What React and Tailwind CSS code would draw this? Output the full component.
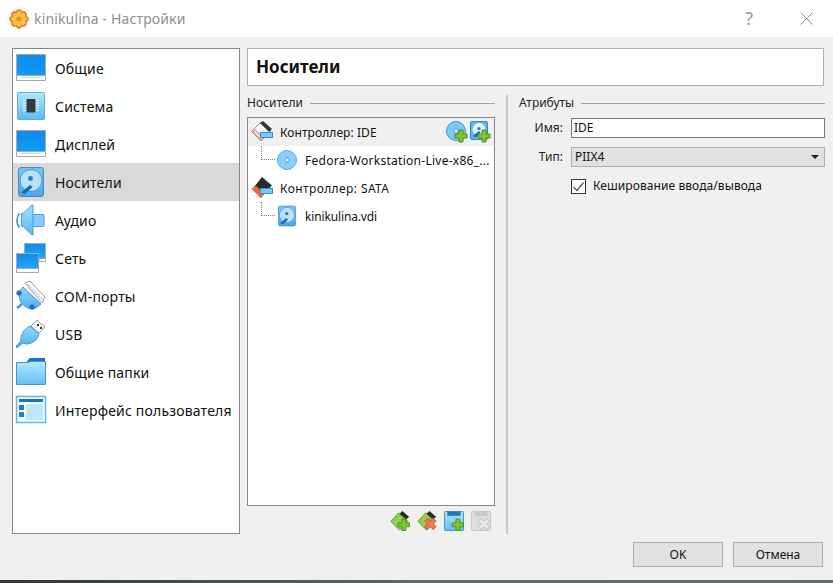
const Grad = ({ id, from, to }) => (
  <defs>
    <linearGradient id={id} x1="0" y1="0" x2="0" y2="1">
      <stop offset="0" stopColor={from} />
      <stop offset="1" stopColor={to} />
    </linearGradient>
  </defs>
);

const Gear = () => (
  <svg width="20" height="20" viewBox="0 0 20 20">
    {[0, 45, 90, 135, 180, 225, 270, 315].map((a) => (
      <circle key={a} cx="10" cy="3.4" r="3.1" fill="#e8772a" transform={`rotate(${a} 10 10)`} />
    ))}
    <circle cx="10" cy="10" r="6.8" fill="#f3a02f" />
    {[0, 45, 90, 135, 180, 225, 270, 315].map((a) => (
      <circle key={a} cx="10" cy="4" r="2" fill="#f9c440" transform={`rotate(${a} 10 10)`} />
    ))}
    <circle cx="10" cy="10" r="4.6" fill="#f9c440" />
    <circle cx="10" cy="10" r="2.6" fill="#ec8a24" />
  </svg>
);

const Monitor = () => (
  <svg width="32" height="30" viewBox="0 0 32 30">
    <Grad id="mon" from="#0f8bee" to="#0c9cf8" />
    <rect x="1.5" y="1.5" width="29" height="21" fill="url(#mon)" stroke="#a5a9ad" />
    <path d="M1.5 22.5h29v5h-29z" fill="#fff" stroke="#a5a9ad" />
    <path d="M6 23.5h20v1.5H6z" fill="#d8d8d8" />
  </svg>
);

const Chip = () => (
  <svg width="32" height="30" viewBox="0 0 32 30">
    <Grad id="chip" from="#aee8ff" to="#57bdf3" />
    <rect x="2.5" y="1.5" width="27" height="27" rx="1.5" fill="url(#chip)" stroke="#69a7de" />
    <path d="M8 9.500h16M8 12h16M8 14.500h16M8 17h16M8 19.500h16" stroke="#eef9ff" strokeWidth="1.2" />
    <rect x="11.500" y="8" width="9" height="13.500" rx="1" fill="#34383f" />
  </svg>
);

const Disk = ({ size = 32 }) => (
  <svg width={size} height={size} viewBox="0 0 32 32">
    <Grad id={`disk${size}`} from="#7cc4f1" to="#4da6e6" />
    <rect x="3.5" y="1.5" width="25" height="29" rx="2.5" fill={`url(#disk${size})`} stroke="#3b8ccd" />
    <circle cx="16" cy="14.5" r="11" fill="#b9e1f8" stroke="#3b8ccd" strokeWidth="0.8" />
    <circle cx="15.500" cy="12.500" r="2.4" fill="#1c7fd0" />
    <path d="M6 26.500l9-7.500 2.500 2-7.500 7z" fill="#1368b5" />
  </svg>
);

const Speaker = () => (
  <svg width="32" height="32" viewBox="0 0 32 32">
    <Grad id="spk" from="#a6e0ff" to="#58b8f1" />
    <rect x="17" y="10.500" width="12" height="12" rx="1" fill="#7fcdf8" stroke="#4f9fdc" />
    <path d="M6.500 9.500h1.500l9-8.500h1v30h-1l-9-8.500H6.500z" fill="url(#spk)" stroke="#4f9fdc" />
    <path d="M4.500 9.500c-3.500 4-3.500 10 0 14" fill="none" stroke="#2f8fdc" strokeWidth="1.5" />
  </svg>
);

const Network = () => (
  <svg width="32" height="32" viewBox="0 0 32 32">
    <Grad id="net" from="#0f8bee" to="#22a7fa" />
    <rect x="9.5" y="1.5" width="21" height="15" fill="url(#net)" stroke="#a5a9ad" />
    <path d="M24 16.5h6.500v3H24z" fill="#fff" stroke="#a5a9ad" />
    <rect x="1.5" y="11.5" width="22" height="15" fill="url(#net)" stroke="#a5a9ad" />
    <path d="M1.5 26.500h22v4h-22z" fill="#fff" stroke="#a5a9ad" />
  </svg>
);

const Com = () => (
  <svg width="32" height="32" viewBox="0 0 32 32">
    <Grad id="com" from="#92d8fc" to="#4fb0ee" />
    <path d="M10 3l5-2 15 16-3 6z" fill="#f8f8f8" stroke="#9a9a9a" />
    <path d="M13 5l14 14" stroke="#bcbcbc" strokeWidth="1.5" strokeDasharray="1.500 1.500" />
    <path d="M8 7l18 17-5 4c-6 2-11 0-15-6C3 17 4 11 8 7z" fill="url(#com)" stroke="#4594d4" />
    <circle cx="4" cy="13" r="2.6" fill="#1971c8" />
    <circle cx="17" cy="27" r="2.6" fill="#1971c8" />
    <path d="M7 24l-5 4" stroke="#4594d4" strokeWidth="2.5" />
  </svg>
);

const Usb = () => (
  <svg width="32" height="32" viewBox="0 0 32 32">
    <Grad id="usb" from="#92d8fc" to="#4fb0ee" />
    <path d="M22 2l8 7-6 6-8-7z" fill="#f7f7f7" stroke="#9a9a9a" />
    <rect x="22" y="6" width="2" height="2" fill="#333" />
    <rect x="25" y="9" width="2" height="2" fill="#333" />
    <path d="M15 8l9 8c-1 6-7 10-13 10l-3-1-6 5-1-2 5-5c-1-6 3-12 9-15z" fill="url(#usb)" stroke="#4594d4" />
  </svg>
);

const Folder = () => (
  <svg width="32" height="30" viewBox="0 0 32 30">
    <Grad id="fold" from="#b4e9ff" to="#62c0f5" />
    <path d="M12 4l3-3h15v6H12z" fill="#1b72c4" />
    <path d="M1.5 5.500h11l3-1h15v23h-29z" fill="url(#fold)" stroke="#3f92d6" />
  </svg>
);

const Ui = () => (
  <svg width="32" height="30" viewBox="0 0 32 30">
    <rect x="1.500" y="1.500" width="29" height="26" fill="#f4fbff" stroke="#64b4ea" strokeWidth="1.500" />
    <rect x="4" y="4" width="24" height="3" fill="#1c72bd" />
    <rect x="4" y="10" width="5" height="5" fill="#1d7fd0" />
    <rect x="4" y="17" width="5" height="5" fill="#1d7fd0" />
    <rect x="11" y="9" width="17" height="16" fill="#bfe7fb" />
  </svg>
);

const ControllerIde = () => (
  <svg width="24" height="24" viewBox="0 0 24 24">
    <path d="M11 2L1.500 11.500 11 21l10-9.500z" fill="#f8f8f8" stroke="#8a8a8a" />
    <path d="M2 12l9 9 3-3-9-9z" fill="#dca088" />
    <path d="M4.500 11.500l7 7" stroke="#f4f4f4" strokeWidth="1.500" />
    <path d="M10 3l3-2 9 8-3 3z" fill="#333" />
    <rect x="10.500" y="12.500" width="12" height="5" fill="#7ccbf7" stroke="#2e8fd8" />
  </svg>
);

const ControllerSata = () => (
  <svg width="24" height="24" viewBox="0 0 24 24">
    <path d="M12 1l10 8.500-4 4H6.500L4 11z" fill="#2c2c2c" />
    <path d="M2 13l4-3 8 8-3 4z" fill="#ef6a3a" stroke="#d65228" strokeWidth="0.6" />
    <rect x="10.500" y="12.500" width="12" height="5" fill="#7ccbf7" stroke="#2e8fd8" />
  </svg>
);

const Plus = ({ x, y, fill = "#7fc52f", stroke = "#4c8f1a" }) => (
  <path
    transform={`translate(${x} ${y})`}
    d="M4 0h4v4h4v4H8v4H4V8H0V4h4z"
    fill={fill}
    stroke={stroke}
    strokeLinejoin="round"
  />
);

const Cross = ({ x, y, fill = "#f4764e", stroke = "#c9552f" }) => (
  <path
    transform={`translate(${x} ${y})`}
    d="M3 0l3 3 3-3 3 3-3 3 3 3-3 3-3-3-3 3-3-3 3-3-3-3z"
    fill={fill}
    stroke={stroke}
    strokeLinejoin="round"
  />
);

const AddDisc = () => (
  <svg width="22" height="22" viewBox="0 0 22 22">
    <circle cx="10" cy="10" r="9.5" fill="#7cc8f5" stroke="#3e9ade" />
    <circle cx="10" cy="10" r="2.2" fill="#d9f0fd" stroke="#3e9ade" />
    <Plus x={9} y={9} />
  </svg>
);

const AddHd = () => (
  <svg width="22" height="22" viewBox="0 0 22 22">
    <rect x="1.5" y="0.5" width="17" height="18" rx="1.5" fill="#64b5ec" stroke="#2e86cc" />
    <circle cx="10" cy="8.5" r="6.5" fill="#e3f4fe" />
    <circle cx="10" cy="7.500" r="1.6" fill="#1b74c4" />
    <path d="M4 15l6-5 1.500 1.500-5 5z" fill="#1368b5" />
    <Plus x={9} y={9} />
  </svg>
);

const Cd = () => (
  <svg width="22" height="22" viewBox="0 0 22 22">
    <circle cx="11" cy="11" r="9.5" fill="#88d0f7" stroke="#52abe6" />
    <circle cx="11" cy="11" r="2.2" fill="#f2fbff" stroke="#3e9ade" />
  </svg>
);

const Diamond = () => (
  <g>
    <path d="M9 2L1 11l9 9 9-9z" fill="#8fd14a" stroke="#5d9e25" />
    <path d="M10 3l3-3 7 6-3 3z" fill="#2a2a2a" />
  </g>
);

const AddCtl = () => (
  <svg width="20" height="20" viewBox="0 0 21 21">
    <Diamond />
    <Plus x={8.500} y={8.500} />
  </svg>
);

const DelCtl = () => (
  <svg width="20" height="20" viewBox="0 0 21 21">
    <path d="M9 2L1 11l9 9 9-9z" fill="#8fd14a" stroke="#5d9e25" />
    <path d="M10 3l3-3 7 6-3 3z" fill="#2a2a2a" />
    <Cross x={8} y={7.500} />
  </svg>
);

const AddAtt = () => (
  <svg width="20" height="20" viewBox="0 0 21 21">
    <Grad id="att" from="#b2e6ff" to="#62bdf3" />
    <rect x="0.5" y="0.5" width="20" height="20" rx="1" fill="url(#att)" stroke="#3e8fd0" />
    <rect x="3.5" y="0.5" width="14" height="4.500" fill="#1b74c4" />
    <Plus x={8.500} y={8.500} />
  </svg>
);

const DelAtt = () => (
  <svg width="20" height="20" viewBox="0 0 21 21">
    <rect x="0.5" y="0.5" width="20" height="20" rx="1" fill="#dedede" stroke="#c6c6c6" />
    <rect x="3.5" y="0.5" width="14" height="4.500" fill="#c9c9c9" />
    <Cross x={7.500} y={7.500} fill="#e8e8e8" stroke="#bdbdbd" />
  </svg>
);

const items = [
  ["Общие", Monitor],
  ["Система", Chip],
  ["Дисплей", Monitor],
  ["Носители", Disk],
  ["Аудио", Speaker],
  ["Сеть", Network],
  ["COM-порты", Com],
  ["USB", Usb],
  ["Общие папки", Folder],
  ["Интерфейс пользователя", Ui],
];

const SectionLabel = ({ children }) => (
  <div className="flex items-center gap-[7px] h-[14px] text-[12px] text-[#222]">
    <span>{children}</span>
    <div className="flex-1 h-px bg-[#a0a0a0]" />
  </div>
);

const TreeLeaf = ({ icon, className, children }) => (
  <div className="flex items-center h-[28px] bg-white">
    <div className="ml-[13px] w-[14px] h-[14px] mb-[14px] border-l border-b border-dotted border-[#888]" />
    <span className="w-[23px] flex justify-center">{icon}</span>
    <span className={`ml-[7px] pt-[2px] text-[#111] ${className}`}>{children}</span>
  </div>
);

export default function App() {
  return (
    <div
      className="w-[833px] h-[583px] flex flex-col overflow-hidden bg-[#f0f0f0] text-black"
      style={{ fontFamily: '"Noto Sans", "Open Sans", sans-serif' }}
    >
      <div className="h-[37px] shrink-0 bg-white flex items-center pl-[9px]">
        <Gear />
        <span className="ml-[5px] text-[14px] tracking-[0.15px] text-[#8a8f96]">kinikulina - Настройки</span>
        <span className="ml-auto mr-[47px] text-[18px] text-[#9a9a9a]">?</span>
        <svg className="mr-[20px]" width="13" height="13" viewBox="0 0 13 13">
          <path d="M0.5 0.5l12 12M12.5 0.5l-12 12" stroke="#8c8c8c" fill="none" />
        </svg>
      </div>

      <div className="flex-1 flex gap-[7px] pl-[12px] pr-[9px] pt-[11px]">
        <div className="w-[228px] h-[486px] border border-[#828790] bg-white">
          {items.map(([label, Icon]) => (
            <div
              key={label}
              className={`h-[38px] flex items-center text-[14px] tracking-[0.18px] text-[#111] ${label === "Носители" ? "bg-[#d9d9d9]" : ""}`}
            >
              <span className="w-[34px] ml-px flex justify-center">
                <Icon />
              </span>
              <span className="ml-[7px] whitespace-nowrap">{label}</span>
            </div>
          ))}
        </div>

        <div className="flex-1 flex flex-col">
          <div className="h-[38px] border border-[#b0b0b0] bg-white flex items-center pl-[8px] text-[17px] font-bold text-[#111]">
            Носители
          </div>
          <div className="flex mt-[9px] h-[439px]">
            <div className="w-[248px] flex flex-col pt-[1px]">
              <SectionLabel>Носители</SectionLabel>
              <div className="mt-[7px] h-[389px] border border-[#828790] bg-white text-[12px]">
                <div className="flex items-center h-[28px] bg-[#f0f0f0] pl-[2px]">
                  <ControllerIde />
                  <span className="ml-[6px] pt-[2px] tracking-[0.07px] text-[#111]">Контроллер: IDE</span>
                  <span className="ml-auto flex gap-[1px] pr-[3px]">
                    <AddDisc />
                    <AddHd />
                  </span>
                </div>
                <TreeLeaf icon={<Cd />} className="tracking-[0.27px]">Fedora-Workstation-Live-x86_...</TreeLeaf>
                <div className="flex items-center h-[28px] pl-[2px]">
                  <ControllerSata />
                  <span className="ml-[6px] pt-[2px] tracking-[0.4px] text-[#111]">Контроллер: SATA</span>
                </div>
                <TreeLeaf icon={<Disk size={22} />} className="tracking-[-0.14px]">kinikulina.vdi</TreeLeaf>
              </div>
              <div className="flex justify-end gap-[7px] mt-[5px] pr-[4px]">
                <AddCtl />
                <DelCtl />
                <AddAtt />
                <DelAtt />
              </div>
            </div>

            <div className="ml-[11px] w-[2px] bg-[#c8c8c8]" />

            <div className="flex-1 ml-[11px] -mr-px pt-[1px] text-[12px]">
              <SectionLabel>Атрибуты</SectionLabel>
              <div className="mt-[8px] grid grid-cols-[44px_1fr] gap-x-[8px] gap-y-[9px] items-center">
                <span className="text-right text-[#222]">Имя:</span>
                <div className="h-[20px] border border-[#7a7a7a] bg-white pl-[2px] flex items-center text-[#111]">IDE</div>
                <span className="text-right text-[#222]">Тип:</span>
                <div className="h-[20px] border border-[#adadad] bg-[#e1e1e1] pl-[3px] flex items-center text-[#111]">
                  PIIX4
                  <span className="ml-auto mr-[5px] w-0 h-0 border-x-[4px] border-x-transparent border-t-[4px] border-t-[#222]" />
                </div>
                <span />
                <div className="flex items-center mt-[1px]">
                  <span className="w-[15px] h-[15px] border border-[#333] bg-white flex items-center justify-center">
                    <svg width="13" height="13" viewBox="0 0 13 13">
                      <path d="M1.5 7l3.500 3.500 6.500-8" fill="none" stroke="#555" strokeWidth="1.2" />
                    </svg>
                  </span>
                  <span className="ml-[7px] tracking-[0.08px] text-[#111]">Кеширование ввода/вывода</span>
                </div>
              </div>
            </div>
          </div>
        </div>
      </div>

      <div className="flex justify-end gap-[10px] pr-[10px] pb-[13px]">
        <button className="w-[90px] h-[25px] border border-[#adadad] bg-[#e1e1e1] text-[12px] text-[#111]">OK</button>
        <button className="w-[90px] h-[25px] border border-[#adadad] bg-[#e1e1e1] text-[12px] text-[#111]">Отмена</button>
      </div>
      <div className="h-[3px] shrink-0 bg-linear-to-r from-[#2e3836] via-[#5b6b66] to-[#5f7068]" />
    </div>
  );
}
